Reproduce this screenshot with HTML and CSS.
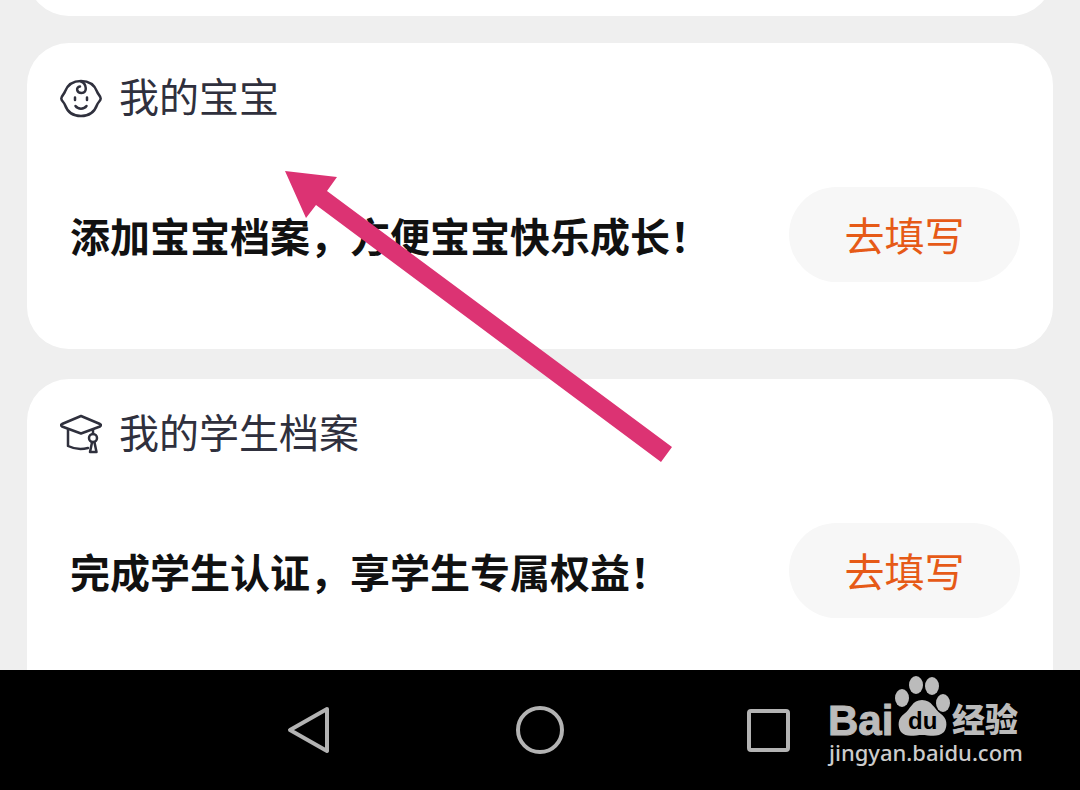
FILE: index.html
```html
<!DOCTYPE html>
<html lang="zh-CN">
<head>
  <meta charset="UTF-8" />
  <meta name="viewport" content="width=device-width, initial-scale=1" />
  <title>我的档案</title>
  <link rel="stylesheet" href="styles.css">
</head>
<body>

  <main class="list">
    <section class="card card-prev"></section>

    <!-- Baby profile -->
    <section class="card">
      <h2 class="card-title">
        <svg class="icon" viewBox="0 0 42 42" aria-hidden="true">
          <path d="M21 3C13 3 7.500 7 5 13.500C4 16.500 1.300 18 1.300 20.500S4 24 5 27C7.500 34 13 38 21 38S34.500 34 37 27C38 24 40.700 23 40.700 20.500S38 16.500 37 13.500C34.500 7 29 3 21 3Z" />
          <path d="M21 3.500C26.500 5.500 28 15 21.500 15C16.500 15 15.500 9 20 8.500" />
          <path d="M15 19.500v2.500M27 19.500v2.500M15.500 28C18 31.500 24 31.500 26.500 28" />
        </svg>
        <span>我的宝宝</span>
      </h2>
      <div class="card-row">
        <p>添加宝宝档案，方便宝宝快乐成长！</p>
        <button type="button">去填写</button>
      </div>
    </section>

    <!-- Student profile -->
    <section class="card card-last">
      <h2 class="card-title">
        <svg class="icon" viewBox="0 0 42 42" aria-hidden="true">
          <path d="M21 2L40 10Q42 11 40 12.500L21 19.500L2 12.500Q0 11 2 10Z" />
          <path d="M8 15.500V32Q17 36.500 28 34M33 15.500v4.500" />
          <circle cx="33" cy="24" r="4" />
          <path d="M32 28.500L30 38H36.500L34.500 28.500" />
        </svg>
        <span>我的学生档案</span>
      </h2>
      <div class="card-row">
        <p>完成学生认证，享学生专属权益！</p>
        <button type="button">去填写</button>
      </div>
    </section>
  </main>

  <nav class="navbar">
    <button type="button" aria-label="返回">
      <svg viewBox="0 0 60 60"><path d="M47 9L10 30L47 51Z" /></svg>
    </button>
    <button type="button" aria-label="主页">
      <svg viewBox="0 0 60 60"><circle cx="30" cy="30" r="22" /></svg>
    </button>
    <button type="button" aria-label="最近任务">
      <svg viewBox="0 0 60 60"><rect x="9" y="11" width="39" height="39" rx="2" /></svg>
    </button>

    <svg class="watermark" viewBox="0 0 210 110" aria-label="Baidu经验">
      <text class="wm-bai" x="8" y="65">Bai</text>
      <ellipse cx="82" cy="28" rx="7" ry="9" />
      <ellipse cx="96" cy="15" rx="7" ry="9" />
      <ellipse cx="112" cy="16" rx="7" ry="9" />
      <ellipse cx="123" cy="33" rx="7" ry="9" />
      <path d="M102 30C92 30 91 39 84 44C78 48 77 56 81 62C86 68 95 65 102 65S118 68 124 62C128 56 127 48 121 44C114 39 112 30 102 30Z" />
      <text class="wm-du" x="88" y="59">du</text>
      <text class="wm-cn" x="132" y="62">经验</text>
      <text class="wm-url" x="9" y="91">jingyan.baidu.com</text>
    </svg>
  </nav>

  <!-- Arrow pointing at the baby card -->
  <svg class="arrow" viewBox="0 0 388 292" aria-hidden="true">
    <path d="M0 0L52 6L42 20L387 276L376 291L31 34L21 47Z" />
  </svg>

</body>
</html>
```
FILE: styles.css
```css
* {
  box-sizing: border-box;
}
body {
  margin: 0;
  position: relative;
  display: flex;
  flex-direction: column;
  height: 100vh;
  overflow: hidden;
  font-family: "Noto Sans CJK SC", sans-serif;
  font-size: 40px;
  background-color: #efefef;
}
h2, p {
  margin: 0;
}
button {
  border: none;
  font-family: inherit;
  cursor: pointer;
}

/* Cards */
.list {
  flex: 1;
  min-height: 0;
  padding: 0 27px;
  overflow: hidden;
}
.card {
  padding: 26px 33px 67px;
  margin-bottom: 30px;
  border-radius: 42px;
  background-color: #fff;
}
.card-prev {
  height: 100px;
  margin-top: -84px;
  margin-bottom: 27px;
}
.card-last {
  padding-bottom: 120px;
}
.card-title {
  display: flex;
  align-items: center;
  gap: 17px;
  height: 60px;
  font-size: 40px;
  font-weight: 400;
  color: #2f303d;
}
.card-title span {
  padding-bottom: 8px;
}
.icon {
  width: 42px;
  height: 42px;
  fill: none;
  stroke: #2f303d;
  stroke-width: 2.5;
  stroke-linecap: round;
  stroke-linejoin: round;
}
.card-row {
  display: flex;
  align-items: center;
  justify-content: space-between;
  margin-top: 58px;
  padding-left: 10px;
}
.card-row p {
  font-weight: 700;
  color: #111;
}
.card-row button {
  width: 231px;
  height: 95px;
  padding: 0 0 2px;
  border-radius: 48px;
  background-color: #f7f7f7;
  color: #e65a17;
  font-size: 40px;
}

/* System bar */
.navbar {
  position: relative;
  display: flex;
  align-items: center;
  justify-content: center;
  gap: 170px;
  height: 120px;
  background-color: #000;
}
.navbar button {
  width: 60px;
  height: 60px;
  padding: 0;
  background: none;
}
.navbar button svg {
  display: block;
  fill: none;
  stroke: #b3b3b3;
  stroke-width: 4;
  stroke-linejoin: round;
}
.watermark {
  position: absolute;
  right: 50px;
  top: 0;
  width: 210px;
  height: 110px;
  fill: #bbb;
}
.wm-bai {
  font: 700 42px "Liberation Sans", sans-serif;
  stroke: #bbb;
}
.wm-du {
  font: 700 24px "Liberation Sans", sans-serif;
  fill: #000;
}
.wm-cn {
  font: 900 33px "Noto Sans CJK SC", sans-serif;
}
.wm-url {
  font: 500 22px "Noto Sans", sans-serif;
  fill: #ccc;
}

.arrow {
  position: absolute;
  left: 285px;
  top: 171px;
  width: 388px;
  height: 292px;
  fill: #dc3373;
  pointer-events: none;
}
```
